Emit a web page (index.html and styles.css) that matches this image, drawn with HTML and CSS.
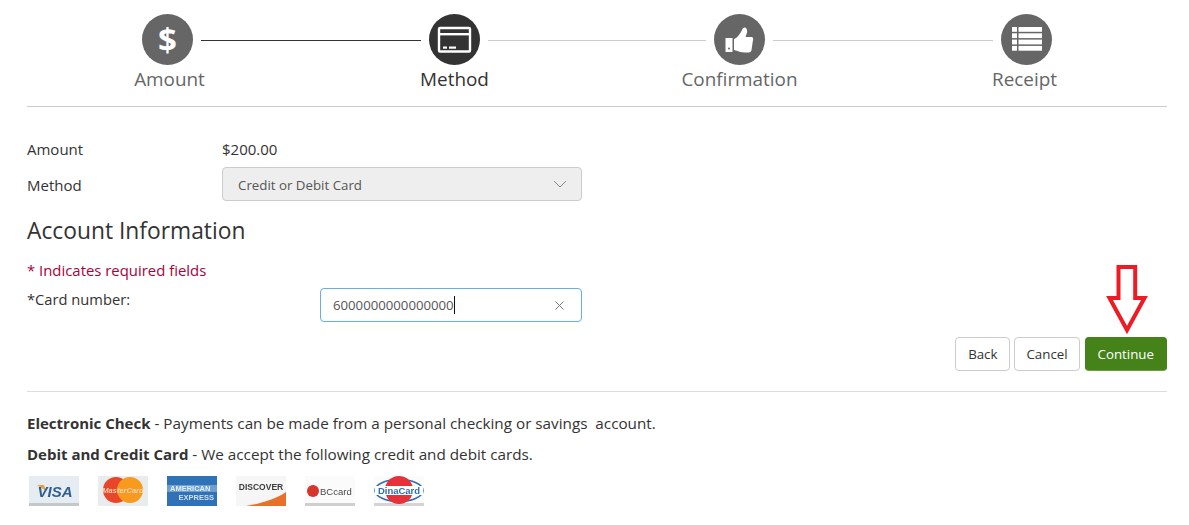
FILE: index.html
```html
<!DOCTYPE html>
<html lang="en">
<head>
  <meta charset="UTF-8" />
  <meta name="viewport" content="width=device-width, initial-scale=1" />
  <title>Make a Payment</title>
  <link rel="stylesheet" href="styles.css">
</head>
<body>
  <div class="page">
    <div class="steps">
      <div class="track">
        <div class="circle"><span class="dollar">$</span></div>
        <div class="line line-done"></div>
        <div class="circle circle-active">
          <svg width="51" height="51" viewBox="0 0 51 51">
            <rect x="10" y="14" width="31" height="23.500" rx="1" fill="none" stroke="#fff" stroke-width="2.400"/>
            <rect x="10" y="19" width="31" height="2.400" fill="#fff"/>
            <rect x="14" y="32.500" width="4" height="2.200" fill="#fff"/>
            <rect x="20" y="32.500" width="7" height="2.200" fill="#fff"/>
          </svg>
        </div>
        <div class="line line-mid"></div>
        <div class="circle">
          <svg width="51" height="51" viewBox="0 0 51 51">
            <path d="M11.500 24h7v14h-7z" fill="#fff"/>
            <circle cx="15" cy="34.500" r="1" fill="#666"/>
            <path d="M20 25c3-1 5-4 7-7 1-2 1.500-4.500 3.500-4.500s3 2.500 2.500 5c-.3 1.500-1 3-1.500 4.500h6c1.500 0 2 1.500 1.500 3l-1.500 10c-.3 1.500-1 2.500-3 2.500-5 0-9-.5-11-1.500l-3.500-1z" fill="#fff"/>
          </svg>
        </div>
        <div class="line"></div>
        <div class="circle">
          <svg width="51" height="51" viewBox="0 0 51 51" fill="#fff">
            <rect x="11" y="13" width="5" height="4.800"/><rect x="17.500" y="13" width="23.500" height="4.800"/>
            <rect x="11" y="19.300" width="5" height="4.800"/><rect x="17.500" y="19.300" width="23.500" height="4.800"/>
            <rect x="11" y="25.600" width="5" height="4.800"/><rect x="17.500" y="25.600" width="23.500" height="4.800"/>
            <rect x="11" y="31.900" width="5" height="4.800"/><rect x="17.500" y="31.900" width="23.500" height="4.800"/>
          </svg>
        </div>
      </div>
      <div class="labels">
        <div>Amount</div>
        <div class="label-active">Method</div>
        <div>Confirmation</div>
        <div>Receipt</div>
      </div>
    </div>

    <div class="row row-amount">
      <div class="row-label">Amount</div>
      <div>$200.00</div>
    </div>
    <div class="row row-method">
      <div class="row-label">Method</div>
      <div class="select">
        <span>Credit or Debit Card</span>
        <svg width="14" height="8" viewBox="0 0 14 8"><path d="M1 1l6 6 6-6" fill="none" stroke="#888" stroke-width="1"/></svg>
      </div>
    </div>

    <h2>Account Information</h2>
    <div class="required">* Indicates required fields</div>

    <div class="card-row">
      <label>*Card number:</label>
      <div class="input">
        <span class="value">6000000000000000</span><span class="caret"></span>
        <svg class="clear" width="9" height="9" viewBox="0 0 9 9"><path d="M.5.500l8 8M8.500.500l-8 8" stroke="#777" stroke-width="1"/></svg>
      </div>
    </div>

    <div class="actions">
      <svg class="arrow" width="42" height="70" viewBox="0 0 42 70">
        <path d="M12.500 2h16.700v31h9.300L21 65 3.500 33h9z" fill="#fff" stroke="#ed1c24" stroke-width="4"/>
      </svg>
      <button>Back</button>
      <button class="cancel">Cancel</button>
      <button class="primary">Continue</button>
    </div>

    <div class="info">
      <p><b>Electronic Check</b> - Payments can be made from a personal checking or savings&nbsp; account.</p>
      <p><b>Debit and Credit Card</b> - We accept the following credit and debit cards.</p>
    </div>

    <div class="cards">
      <svg class="card" width="50" height="30" viewBox="0 0 50 30">
        <rect width="50" height="30" fill="#e6edf2"/>
        <rect y="27" width="50" height="3" fill="#c4c8c8"/>
        <path d="M8 9h7l2 6z" fill="#e8a33d"/>
        <text x="26" y="21" text-anchor="middle" class="logo-text" font-size="15" font-style="italic" font-weight="700" fill="#2f5f92">VISA</text>
      </svg>
      <svg class="card" width="50" height="30" viewBox="0 0 50 30">
        <rect width="50" height="30" fill="#e8ecef"/>
        <circle cx="18" cy="14" r="13" fill="#e8452a"/>
        <circle cx="32" cy="14" r="13" fill="#f79a1d"/>
        <text x="25" y="17" text-anchor="middle" class="logo-text" font-size="7.500" font-style="italic" font-weight="700" fill="#fbd3b0">MasterCard</text>
      </svg>
      <svg class="card" width="50" height="30" viewBox="0 0 50 30">
        <rect width="50" height="30" fill="#2f72b8"/>
        <rect y="9" width="50" height="7" fill="#6f9fd0"/>
        <text x="3" y="15" class="logo-text" font-size="7.500" font-weight="700" fill="#e4edf6">AMERICAN</text>
        <text x="47" y="24" text-anchor="end" class="logo-text" font-size="7.500" font-weight="700" fill="#cfe0f0">EXPRESS</text>
      </svg>
      <svg class="card" width="50" height="30" viewBox="0 0 50 30">
        <rect width="50" height="30" fill="#f6f6f6"/>
        <path d="M10 30C28 27 42 22 50 16v14z" fill="#e8702a"/>
        <text x="25" y="14" text-anchor="middle" class="logo-text" font-size="8.500" font-weight="700" fill="#3d3d3d">DISCOVER</text>
      </svg>
      <svg class="card" width="50" height="30" viewBox="0 0 50 30">
        <rect width="50" height="30" fill="#fbfbfb"/>
        <rect y="27" width="50" height="3" fill="#cfcfcf"/>
        <circle cx="8" cy="15" r="6" fill="#d9342c"/>
        <text x="15" y="19" class="logo-text" font-size="9.500" fill="#4a4a4a">BCcard</text>
      </svg>
      <svg class="card" width="50" height="30" viewBox="0 0 50 30">
        <rect width="50" height="30" fill="#fbfbfb"/>
        <rect y="27" width="50" height="3" fill="#d4d4d4"/>
        <ellipse cx="25" cy="14.500" rx="24" ry="11" fill="none" stroke="#2f6db0" stroke-width="1.500"/>
        <circle cx="25" cy="14" r="14" fill="#e5323a"/>
        <rect x="1" y="10" width="48" height="9" fill="#fff"/>
        <text x="25" y="18" text-anchor="middle" class="logo-text" font-size="9.500" font-weight="700" fill="#2f6db0">DinaCard</text>
      </svg>
    </div>
  </div>
</body>
</html>
```

FILE: styles.css
```css
body {
  margin: 0;
  background: white;
  font-family: "Open Sans", "Noto Sans", Arial, sans-serif;
  font-size: 15px;
  color: #333;
}
.page {
  width: 1140px;
  margin-left: 27px;
}

/* wizard */
.steps {
  padding-top: 14px;
  border-bottom: 1px solid #ccc;
  height: 92px;
}
.track {
  display: flex;
  align-items: center;
  gap: 8px;
  padding: 0 115px;
}
.circle {
  width: 51px;
  height: 51px;
  flex: none;
  border-radius: 50%;
  background: #666;
  color: white;
  display: flex;
  align-items: center;
  justify-content: center;
}
.circle-active {
  background: #333;
}
.dollar {
  font-size: 33px;
  font-weight: 700;
  line-height: 1;
}
.line {
  flex: 0 0 220px;
  height: 1px;
  margin-top: 1px;
  background: #ccc;
}
.line-mid {
  flex-basis: 218px;
}
.line-done {
  background: #333;
}
.labels {
  display: grid;
  grid-template-columns: repeat(4, 1fr);
  text-align: center;
  font-size: 18.900px;
  line-height: 28px;
  color: #666;
}
.label-active {
  color: #333;
}

/* form */
.row {
  display: flex;
  align-items: center;
}
.row-label {
  width: 195px;
}
.row-amount {
  margin-top: 31px;
  height: 22px;
}
.row-method {
  margin-top: 7px;
}
.row-method .row-label {
  padding-top: 2px;
}
.select {
  width: 360px;
  height: 34px;
  box-sizing: border-box;
  padding: 0 14px 0 15px;
  display: flex;
  align-items: center;
  justify-content: space-between;
  background: #eee;
  border: 1px solid #ccc;
  border-radius: 4px;
  font-size: 13.300px;
  color: #555;
}
.select span {
  padding-top: 2px;
}
h2 {
  margin: 15px 0 0;
  font-size: 22.800px;
  font-weight: 400;
  line-height: 30px;
}
.required {
  margin-top: 14px;
  font-size: 14.900px;
  color: #a6023c;
  line-height: 20px;
}
.card-row {
  display: flex;
  align-items: flex-start;
  margin-top: 8px;
}
.card-row label {
  width: 293px;
  font-size: 14.700px;
  line-height: 22px;
}
.input {
  width: 262px;
  height: 34px;
  box-sizing: border-box;
  padding: 0 12px;
  display: flex;
  align-items: center;
  background: white;
  border: 1px solid #66afe9;
  border-radius: 4px;
  font-size: 13.200px;
  color: #555;
}
.caret {
  width: 1px;
  height: 18px;
  background: #111;
}
.clear {
  margin-left: auto;
  margin-right: 5px;
}

/* buttons */
.actions {
  position: relative;
  display: flex;
  justify-content: flex-end;
  gap: 4px;
  margin-top: 15px;
  padding-bottom: 20px;
  border-bottom: 1px solid #ddd;
}
.arrow {
  position: absolute;
  right: 19px;
  top: -72px;
}
button {
  height: 34px;
  padding: 0 12px;
  font-family: inherit;
  font-size: 13.300px;
  color: #333;
  background: white;
  border: 1px solid #ccc;
  border-radius: 4px;
}
.cancel {
  padding: 0 11px;
}
.primary {
  margin-left: 1px;
  color: white;
  background: #45831a;
  border-color: #45831a;
  border-bottom-color: #6a9f45;
}

/* footer */
.info {
  margin-top: 21px;
}
.info p {
  margin: 0 0 10px;
  font-size: 15.250px;
  line-height: 21px;
}
.info b {
  font-size: 15px;
}
.cards {
  display: flex;
  gap: 19px;
  padding-top: 1px;
  margin-left: 2px;
}
.card {
  filter: blur(0.5px);
}
.logo-text {
  font-family: "Liberation Sans", Arial, sans-serif;
}
```
